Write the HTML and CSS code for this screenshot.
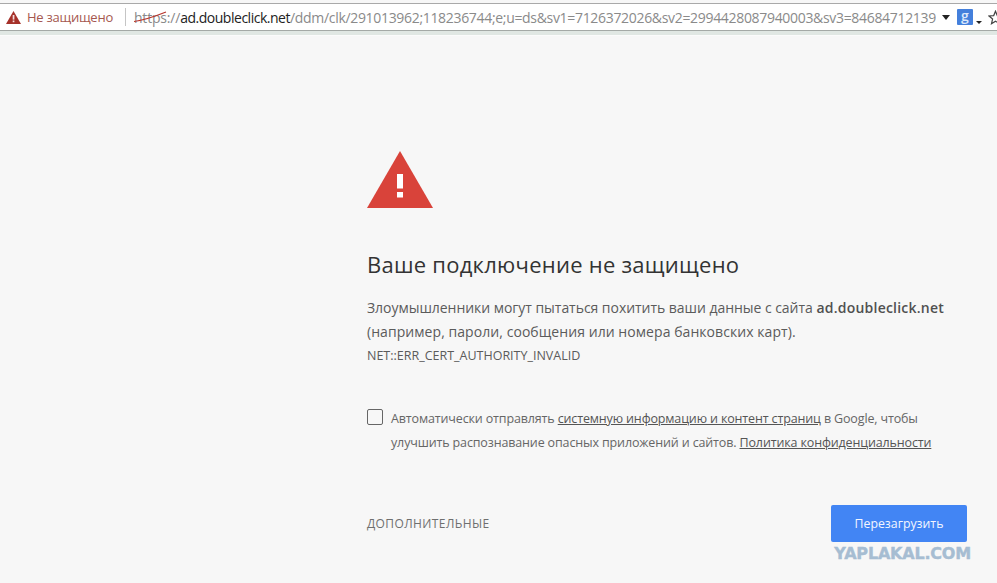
FILE: index.html
```html
<!DOCTYPE html>
<html lang="ru">
<head>
<meta charset="utf-8">
<title>Ошибка конфиденциальности</title>
<link rel="stylesheet" href="styles.css">
</head>
<body>
<header class="toolbar">
  <div class="warn">
    <svg class="warn-icon" width="15" height="13" viewBox="0 0 15 13"><path d="M7.5 0 15 13H0Z" fill="#a5312a"/><rect x="6.7" y="4" width="1.7" height="4.6" fill="#f4dcdc"/><rect x="6.7" y="9.5" width="1.7" height="1.7" fill="#f4dcdc"/></svg>
    <span class="warn-text">Не защищено</span>
  </div>
  <div class="sep"></div>
  <div class="url"><span class="scheme"><span class="https">https<svg class="strike" width="34" height="12" viewBox="0 0 34 12"><path d="M1 10.5C11 9 23 5 33 1" fill="none" stroke="#b8352c" stroke-width="1.2"/></svg></span>://</span><span class="host">ad.doubleclick.net</span><span class="path">/ddm/clk/291013962;118236744;e;u=ds&amp;sv1=7126372026&amp;sv2=2994428087940003&amp;sv3=84684712139</span></div>
  <div class="tools">
    <span class="caret big"></span>
    <span class="gbtn">g</span>
    <span class="caret small"></span>
    <svg class="star" width="15" height="15" viewBox="0 0 15 15"><path d="M7.5 1.2 9.3 5.6 14 6 10.4 9 11.5 13.7 7.5 11.2 3.5 13.7 4.6 9 1 6 5.7 5.6Z" fill="none" stroke="#444" stroke-width="1.2"/></svg>
  </div>
</header>
<main class="page">
  <svg class="alert" width="66" height="58" viewBox="0 0 66 58"><path d="M33 0 66 57H0Z" fill="#d9433a"/><rect x="30" y="23" width="6" height="14.5" fill="#fff"/><rect x="30" y="41" width="6" height="5.5" fill="#fff"/></svg>
  <h1 class="title">Ваше подключение не защищено</h1>
  <p class="desc"><span class="lead">Злоумышленники могут пытаться похитить ваши данные с сайта</span> <b>ad.doubleclick.net</b><br>(например, пароли, сообщения или номера банковских карт).</p>
  <p class="code">NET::ERR_CERT_AUTHORITY_INVALID</p>
  <div class="opt">
    <span class="check"></span>
    <p class="opt-text">Автоматически отправлять <a class="lnk">системную информацию и контент страниц</a> в Google, чтобы<br>улучшить распознавание опасных приложений и сайтов. <a class="lnk">Политика конфиденциальности</a></p>
  </div>
  <div class="actions">
    <span class="more">ДОПОЛНИТЕЛЬНЫЕ</span>
    <span class="reload">Перезагрузить</span>
  </div>
  <div class="mark-row"><span class="mark">YAPLAKAL.COM</span></div>
</main>
</body>
</html>
```
FILE: styles.css
```css
* { box-sizing: border-box; }
html, body { margin: 0; height: 100%; overflow: hidden; }
body { background: #f7f7f7; font-family: "Open Sans", "Noto Sans", sans-serif; color: #555; }
.toolbar {
  height: 28px; background: #fff; display: flex; align-items: center;
  border-top: 1px solid #a9a9a9; border-bottom: 1px solid #a4a9a6;
  margin-top: 3px;
  box-shadow: 0 4px 0 #e0e7e3, 0 5px 0 #fbfbfb; padding: 0 0 0 6px; white-space: nowrap; overflow: hidden;
}
.warn { display: flex; align-items: center; flex: none; }
.warn-icon { display: block; }
.warn-text { margin-left: 6px; font-size: 13px; letter-spacing: -0.25px; color: #a5574f; }
.sep { flex: none; width: 1px; height: 18px; background: #c5c5c5; margin: 0 8px 0 12px; }
.url { flex: none; width: 802px; overflow: hidden; font-size: 14px; letter-spacing: -0.2px; color: #8a8a8a; }
.https { position: relative; }
.strike { position: absolute; left: -1px; top: 3px; }
.host { color: #222; letter-spacing: -0.48px; }
.path { letter-spacing: -0.32px; }
.tools { display: flex; align-items: center; flex: none; margin-left: 6px; }
.caret { display: block; width: 0; height: 0; border-style: solid; border-color: #222 transparent transparent; }
.caret.big { border-width: 5px 4px 0; }
.gbtn { display: block; width: 16px; height: 16px; margin-left: 7px; background: #4480dc; color: #dce8fa; font-size: 14px; font-weight: 600; line-height: 13px; text-align: center; border-radius: 1px; }
.caret.small { border-width: 3px 3px 0; margin: 10px 0 0 3px; }
.star { margin-left: 6px; flex: none; }
.page { padding: 120px 30px 0 367px; }
.alert { display: block; }
.title { margin: 41px 0 0; font-size: 22px; font-weight: 400; line-height: 29px; color: #333; letter-spacing: 0.25px; }
.desc { margin: 17px 0 0; font-size: 14px; line-height: 24px; letter-spacing: 0.06px; color: #5b5b5b; white-space: nowrap; }
.lead { letter-spacing: -0.04px; }
.desc b { font-weight: 600; color: #505050; letter-spacing: 0.22px; }
.code { margin: 2px 0 0; font-size: 12.5px; line-height: 20px; color: #5b5b5b; }
.opt { display: flex; margin-top: 43px; }
.check { flex: none; width: 16px; height: 16px; border: 1px solid #666; border-radius: 2px; }
.opt-text { margin: -2px 0 0 8px; font-size: 12.5px; line-height: 24px; letter-spacing: -0.14px; color: #666; white-space: nowrap; }
.lnk { text-decoration: underline; color: #555; }
.actions { display: flex; justify-content: space-between; align-items: center; margin-top: 50px; }
.more { font-size: 12px; color: #6f6f6f; letter-spacing: 0.4px; }
.reload { display: block; width: 136px; height: 37px; background: #4285f4; border-radius: 2px; color: #f2f6ff; font-size: 12.3px; line-height: 37px; text-align: center; }
.mark-row { display: flex; justify-content: flex-end; }
.mark { font-family: "DejaVu Sans", sans-serif; font-size: 16px; font-weight: 700; line-height: 18px; color: #a6bdd2; letter-spacing: -0.2px; margin-right: -4px; margin-top: 3px; -webkit-text-stroke: 0.4px #a6bdd2; }
```
